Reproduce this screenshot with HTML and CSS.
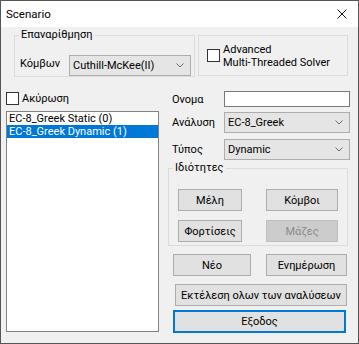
FILE: index.html
```html
<!DOCTYPE html>
<html lang="el">
<head>
  <meta charset="UTF-8">
  <title>Scenario</title>
  <link rel="stylesheet" href="styles.css">
</head>
<body>
  <div class="window">
    <div class="titlebar">
      <span class="title">Scenario</span>
      <svg class="close" width="10" height="10" viewBox="0 0 10 10">
        <path d="M0.5 0.5 L9.5 9.5 M9.5 0.5 L0.5 9.5" stroke="#111" stroke-width="1" fill="none"/>
      </svg>
    </div>

    <div class="client">
      <div class="top-row">
        <div class="group renumber">
          <span class="group-title">Επαναρίθμηση</span>
          <div class="field-row">
            <span class="label nodes-label">Κόμβων</span>
            <div class="combo nodes-combo">
              <span>Cuthill-McKee(II)</span>
              <svg width="8" height="5" viewBox="0 0 8 5"><path d="M0.5 0.5 L4 4 L7.5 0.5" stroke="#6d6d6d" fill="none"/></svg>
            </div>
          </div>
        </div>
        <div class="group solver">
          <input type="checkbox" class="check" id="solver">
          <label for="solver" class="solver-text">Advanced<br>Multi-Threaded Solver</label>
        </div>
      </div>

      <div class="main-row">
        <div class="left-col">
          <div class="check-row">
            <input type="checkbox" class="check" id="cancel">
            <label for="cancel">Ακύρωση</label>
          </div>
          <ul class="listbox">
            <li>EC-8_Greek Static (0)</li>
            <li class="selected">EC-8_Greek Dynamic (1)</li>
          </ul>
        </div>

        <div class="right-col">
          <div class="form-row name-row">
            <span class="label">Ονομα</span>
            <input type="text" class="textbox">
          </div>
          <div class="form-row analysis-row">
            <span class="label">Ανάλυση</span>
            <div class="combo wide">
              <span>EC-8_Greek</span>
              <svg width="8" height="5" viewBox="0 0 8 5"><path d="M0.5 0.5 L4 4 L7.5 0.5" stroke="#6d6d6d" fill="none"/></svg>
            </div>
          </div>
          <div class="form-row type-row">
            <span class="label">Τύπος</span>
            <div class="combo wide">
              <span>Dynamic</span>
              <svg width="8" height="5" viewBox="0 0 8 5"><path d="M0.5 0.5 L4 4 L7.5 0.5" stroke="#6d6d6d" fill="none"/></svg>
            </div>
          </div>

          <div class="group props">
            <span class="group-title">Ιδιότητες</span>
            <div class="btn-grid">
              <button class="btn short">Μέλη</button>
              <button class="btn long">Κόμβοι</button>
              <button class="btn short">Φορτίσεις</button>
              <button class="btn long" disabled>Μάζες</button>
            </div>
          </div>

          <div class="action-row">
            <button class="btn new-btn">Νέο</button>
            <button class="btn update-btn">Ενημέρωση</button>
          </div>
          <button class="btn run-all">Εκτέλεση ολων των αναλύσεων</button>
          <button class="btn exit-btn">Εξοδος</button>
        </div>
      </div>
    </div>
  </div>
</body>
</html>
```

FILE: styles.css
```css
body {
  margin: 0;
  font-family: Roboto, "Noto Sans", sans-serif;
  font-size: 11px;
  color: #000;
  background: #f0f0f0;
}

.window {
  width: 359px;
  height: 344px;
  box-sizing: border-box;
  border: 1px solid #555;
  background: #f0f0f0;
  display: flex;
  flex-direction: column;
}

.titlebar {
  height: 26px;
  background: #fff;
  display: flex;
  align-items: center;
  justify-content: space-between;
  padding: 0 11px 0 5px;
  flex-shrink: 0;
  font-size: 11.5px;
}

.title {
  line-height: 14px;
}

.client {
  flex: 1;
}

/* group boxes */
.group {
  border: 1px solid #dcdcdc;
  box-sizing: border-box;
}

.group-title {
  display: inline-block;
  margin: -8px 0 0 4px;
  padding: 0 2px;
  line-height: 14px;
  background: #f0f0f0;
  vertical-align: top;
}

.top-row {
  display: flex;
  margin-top: 8px;
  padding-left: 13px;
}

.renumber {
  width: 181px;
  height: 42px;
}

.field-row {
  display: flex;
  align-items: center;
  margin-top: 6px;
  padding-left: 5px;
}

.nodes-label {
  width: 49px;
  position: relative;
  top: -2px;
}

.solver {
  width: 150px;
  height: 41px;
  margin-left: 3px;
  display: flex;
  align-items: center;
  padding-left: 8px;
}

.solver-text {
  line-height: 13px;
  margin-left: 3px;
  white-space: nowrap;
}

/* combos */
.combo {
  height: 21px;
  box-sizing: border-box;
  border: 1px solid #adadad;
  background: #e5e5e5;
  display: flex;
  align-items: center;
  justify-content: space-between;
  padding: 0 6px 0 3px;
}

.nodes-combo {
  width: 122px;
}

.wide {
  width: 126px;
}

/* checkboxes */
.check {
  appearance: none;
  -webkit-appearance: none;
  width: 13px;
  height: 13px;
  margin: 0;
  border: 1px solid #333;
  background: #fff;
  flex-shrink: 0;
}

.main-row {
  display: flex;
  margin-top: 14px;
  padding-left: 5px;
}

.left-col {
  width: 153px;
}

.check-row {
  display: flex;
  align-items: center;
  height: 15px;
}

.check-row label {
  margin-left: 3px;
  line-height: 13px;
}

.listbox {
  list-style: none;
  margin: 5px 0 0;
  padding: 0;
  height: 221px;
  box-sizing: border-box;
  border: 1px solid #828282;
  background: #fff;
}

.listbox li {
  height: 13px;
  line-height: 13px;
  padding-left: 2px;
  white-space: nowrap;
}

.listbox .selected {
  background: #0078d7;
  color: #fff;
}

/* right column */
.right-col {
  width: 182px;
  margin-left: 9px;
}

.form-row {
  display: flex;
  align-items: center;
}

.form-row .label {
  width: 56px;
  padding-left: 4px;
  box-sizing: border-box;
}

.textbox {
  width: 126px;
  height: 16px;
  box-sizing: border-box;
  border: 1px solid #7a7a7a;
  background: #fff;
  margin: 0;
  padding: 0;
}

.analysis-row {
  margin-top: 5px;
}

.type-row {
  margin-top: 6px;
}

.props {
  width: 180px;
  height: 78px;
  margin-top: 8px;
}

.btn-grid {
  display: grid;
  grid-template-columns: 64px 72px;
  column-gap: 24px;
  row-gap: 9px;
  margin: 7px 0 0 9px;
}

/* buttons */
.btn {
  font-family: inherit;
  font-size: 11px;
  color: #000;
  height: 22px;
  box-sizing: border-box;
  border: 1px solid #adadad;
  background: #e1e1e1;
  margin: 0;
  padding: 0;
  white-space: nowrap;
}

.btn:disabled {
  background: #cccccc;
  border-color: #bfbfbf;
  color: #8a8a8a;
}

.action-row {
  display: flex;
  margin-top: 8px;
  padding-left: 5px;
}

.new-btn {
  width: 78px;
}

.update-btn {
  width: 81px;
  margin-left: 15px;
}

.run-all {
  display: block;
  width: 172px;
  margin: 8px 0 0 7px;
}

.exit-btn {
  display: block;
  width: 173px;
  height: 23px;
  margin: 4px 0 0 5px;
  border: 2px solid #0078d7;
}
```
